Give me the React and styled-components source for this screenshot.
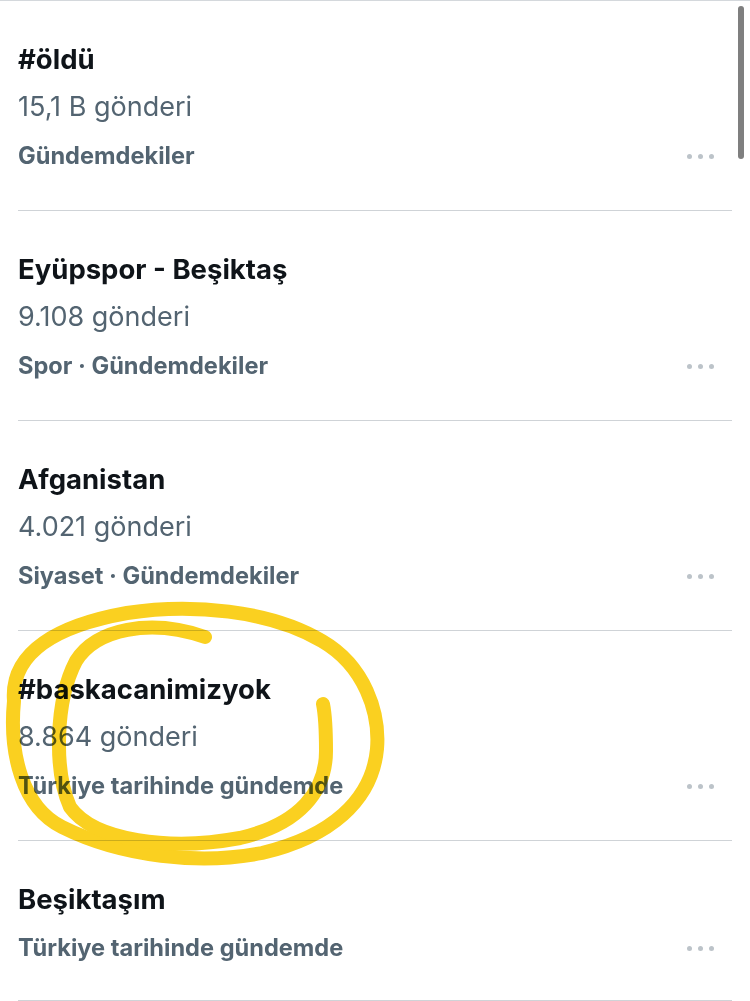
import React from 'react'
import styled, { createGlobalStyle } from 'styled-components'

const GlobalStyle = createGlobalStyle`
  html, body {
    margin: 0;
    padding: 0;
    background: #fff;
  }
  body {
    font-family: Inter, "Noto Sans", "Liberation Sans", sans-serif;
    -webkit-font-smoothing: antialiased;
  }
`

const trends = [
  { title: '#öldü', count: '15,1 B gönderi', category: 'Gündemdekiler' },
  { title: 'Eyüpspor - Beşiktaş', count: '9.108 gönderi', category: 'Spor · Gündemdekiler' },
  { title: 'Afganistan', count: '4.021 gönderi', category: 'Siyaset · Gündemdekiler' },
  { title: '#baskacanimizyok', count: '8.864 gönderi', category: 'Türkiye tarihinde gündemde' },
  { title: 'Beşiktaşım', category: 'Türkiye tarihinde gündemde' }
]

export default function App () {
  return (
    <Page>
      <GlobalStyle />
      <List>
        {trends.map(t => (
          <Trend key={t.title}>
            <Title>{t.title}</Title>
            {t.count && <Count>{t.count}</Count>}
            <MetaRow>
              <Category>{t.category}</Category>
              <More aria-label='Daha fazla'>
                <Dot /><Dot /><Dot />
              </More>
            </MetaRow>
          </Trend>
        ))}
      </List>
      <Scrollbar />
      <Scribble viewBox='0 0 750 1001' width='750' height='1001'>
        <path d='M 14 700 C 10 650, 60 624, 127 612 C 190 602, 270 609, 322 640 C 365 665, 380 712, 377 748 C 372 800, 330 836, 262 852 C 200 864, 122 856, 62 826 C 22 806, 9 752, 14 700 Z' />
        <path d='M 205 636 C 150 617, 96 628, 76 660 C 55 700, 54 770, 70 806 C 94 840, 170 850, 240 837 C 300 823, 326 790, 326 750 C 326 726, 325 713, 323 703' />
      </Scribble>
    </Page>
  )
}

const Page = styled.div`
  position: relative;
  width: 750px;
  background: #fff;
  border-top: 1px solid #d4d8dc;
`

const List = styled.div`
  display: flex;
  flex-direction: column;
  padding: 0 18px;
`

const Trend = styled.div`
  display: flex;
  flex-direction: column;
  padding: 34px 0 31px;
  border-bottom: 1px solid #cfd3d7;

  &:last-child {
    padding-bottom: 29px;
  }
`

const Title = styled.div`
  font-size: 27.5px;
  font-weight: 700;
  line-height: 48px;
  color: #0f1419;
`

const Count = styled.div`
  font-size: 27px;
  font-weight: 400;
  line-height: 48px;
  color: #536471;
`

const MetaRow = styled.div`
  display: flex;
  align-items: center;
  justify-content: space-between;
  height: 48px;
`

const Category = styled.div`
  font-size: 23.6px;
  font-weight: 700;
  color: #536471;
`

const More = styled.div`
  display: flex;
  gap: 6px;
  margin-right: 18px;
  padding-top: 2px;
`

const Dot = styled.span`
  width: 5px;
  height: 5px;
  border-radius: 50%;
  background: #bcc3c9;
`

const Scrollbar = styled.div`
  position: absolute;
  top: 5px;
  right: 6px;
  width: 6px;
  height: 153px;
  border-radius: 3px;
  background: #7f7f7f;
`

const Scribble = styled.svg`
  position: absolute;
  top: 0;
  left: 0;
  pointer-events: none;
  mix-blend-mode: multiply;
  fill: none;
  stroke: #fad020;
  stroke-width: 14;
  stroke-linecap: round;
  stroke-linejoin: round;
`
